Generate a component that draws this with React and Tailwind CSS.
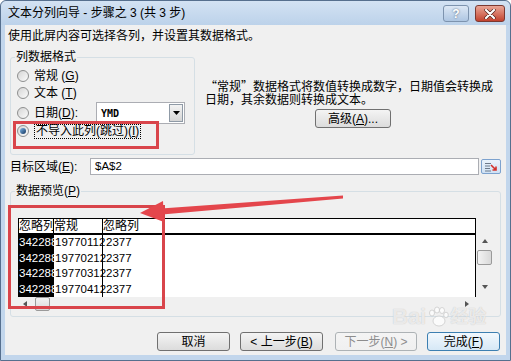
import clsx from "clsx";

function Radio({ checked }) {
  return (
    <span className="flex h-[12px] w-[12px] shrink-0 items-center justify-center rounded-full border border-[#8e8f8f] bg-linear-to-br from-[#d5d5d5] to-[#fbfbfb]">
      {checked && (
        <span className="h-[6px] w-[6px] rounded-full bg-linear-to-br from-[#7fb8ea] to-[#16375f]" />
      )}
    </span>
  );
}

function Btn({ children, className, disabled, focused }) {
  return (
    <div
      className={clsx(
        "flex h-[19px] shrink-0 items-center justify-center rounded-[3px] border bg-linear-to-b text-[12px] leading-[14px]",
        focused && "border-[#3c7fb1] from-[#f2f8fd] to-[#d6e8f6] text-black",
        disabled && "border-[#adb2b5] from-[#f4f4f4] to-[#f0f0f0] text-[#8d8d8d]",
        !focused && !disabled && "border-[#707070] from-[#f4f4f4] to-[#dcdcdc] text-black",
        className
      )}
    >
      {children}
    </div>
  );
}

function GroupLabel({ children }) {
  return (
    <span className="absolute -top-[8px] left-[4px] bg-[#f0f0f0] px-[1px] text-[12px] leading-[14px]">
      {children}
    </span>
  );
}

const rows = ["19770112", "19770212", "19770312", "19770412"];

export default function App() {
  return (
    <div className="relative h-[361px] w-[511px] overflow-hidden bg-white font-['Liberation_Sans','Noto_Sans_CJK_SC',sans-serif] text-black">
      <div className="flex h-full flex-col rounded-t-[6px] border border-[#566f8e] bg-[#c2d6ec]">
        {/* title bar */}
        <div className="flex h-[24px] shrink-0 items-start rounded-t-[6px] bg-linear-to-b from-[#d3e2f3] to-[#bcd2ea]">
          <span className="pl-[7px] pt-[5px] text-[12px] leading-[14px] text-black">
            文本分列向导 - 步骤之 3 (共 3 步)
          </span>
          <div className="ml-auto mt-[4px] flex h-[17px] w-[26px] items-center justify-center rounded-[3px] border border-[#7d93ae] bg-linear-to-b from-[#dde8f5] to-[#aec6e2] text-[12px] font-bold text-white [text-shadow:0_0_2px_#44566e]">
            ?
          </div>
          <div className="ml-[6px] mr-[5px] mt-[4px] flex h-[17px] w-[30px] items-center justify-center rounded-[3px] border border-[#7b3931] bg-linear-to-b from-[#e8a596] to-[#c2412e]">
            <svg width="12" height="10" viewBox="0 0 12 10">
              <path d="M2 1 L10 9 M10 1 L2 9" stroke="#4a1d18" strokeWidth="3.4" strokeLinecap="round" />
              <path d="M2 1 L10 9 M10 1 L2 9" stroke="#fff" strokeWidth="2.2" strokeLinecap="round" />
            </svg>
          </div>
        </div>

        {/* client area */}
        <div className="mx-[4px] mb-[5px] flex flex-1 flex-col bg-[#f0f0f0] text-[12px]">
          <div className="h-[19px] pl-[3px] pt-[3px] leading-[16px]">
            使用此屏内容可选择各列，并设置其数据格式。
          </div>

          <div className="mt-[13px] flex">
            <div className="relative ml-[5px] h-[98px] w-[185px] shrink-0 rounded-[3px] border border-[#d5dfe5]">
              <GroupLabel>列数据格式</GroupLabel>
              <div className="flex flex-col pl-[6px] pt-[10px]">
                <div className="flex h-[16px] items-center gap-[5px]">
                  <Radio />
                  <span>常规 (<u>G</u>)</span>
                </div>
                <div className="flex h-[18px] items-center gap-[5px]">
                  <Radio />
                  <span>文本 (<u>T</u>)</span>
                </div>
                <div className="flex h-[22px] items-center gap-[5px]">
                  <Radio />
                  <span>日期(<u>D</u>):</span>
                  <div className="ml-auto mr-[9px] flex h-[22px] w-[89px] items-center border border-[#abadb3] bg-white">
                    <span className="pl-[4px] font-['DejaVu_Sans_Mono',monospace] text-[10px] font-bold">YMD</span>
                    <div className="ml-auto mr-[1px] flex h-[18px] w-[14px] items-center justify-center border border-[#8f9aa6] bg-linear-to-b from-[#f3f3f3] to-[#d5d5d5]">
                      <svg width="7" height="4" viewBox="0 0 7 4">
                        <path d="M0 0 H7 L3.5 4 Z" fill="#000" />
                      </svg>
                    </div>
                  </div>
                </div>
                <div className="flex h-[14px] items-center gap-[5px]">
                  <Radio checked />
                  <span className="border border-dotted border-black px-[1px] leading-[13px]">
                    不导入此列(跳过)(<u>I</u>)
                  </span>
                </div>
              </div>
            </div>

            <div className="ml-[10px] mt-[22px] flex flex-col leading-[13px]">
              <div className="whitespace-nowrap">
                <span className="font-['Noto_Sans_CJK_SC',sans-serif]">“</span>常规
                <span className="font-['Noto_Sans_CJK_SC',sans-serif]">”</span>数据格式将数值转换成数字，日期值会转换成
              </div>
              <div className="whitespace-nowrap">日期，其余数据则转换成文本。</div>
              <Btn className="ml-[110px] mt-[2px] w-[76px] self-start">
                高级(<u>A</u>)...
              </Btn>
            </div>
          </div>

          <div className="mt-[3px] flex h-[17px] items-center">
            <span className="w-[85px] shrink-0 pl-[5px]">目标区域(<u>E</u>):</span>
            <div className="flex h-[17px] flex-1 items-center border border-[#abadb3] bg-white pl-[4px] text-[11.5px]">
              $A$2
            </div>
            <div className="ml-[2px] mr-[5px] flex h-[15px] w-[20px] items-center justify-center rounded-[2px] border border-[#7da2ce] bg-linear-to-b from-[#eaf3fc] to-[#cfe1f4]">
              <svg width="14" height="10" viewBox="0 0 14 10">
                <path d="M1 1.5 H7 M1 4 H6 M1 6.5 H6 M1 9 H7" stroke="#6d7a8a" strokeWidth="1" />
                <path d="M7 3 L12 8 M12 4.5 V8 H8.5" stroke="#d4302a" strokeWidth="1.6" fill="none" />
              </svg>
            </div>
          </div>

          <div className="relative ml-[5px] mr-[5px] mt-[16px] h-[126px] rounded-[3px] border border-[#d5dfe5]">
            <GroupLabel>数据预览(<u>P</u>)</GroupLabel>
            <div className="pl-[7px] pt-[26px]">
              <div className="flex h-[93px] w-[475px] flex-col">
                <div className="flex h-[79px]">
                  <div className="flex w-[458px] flex-col border-x border-t border-black bg-white">
                    <div className="flex h-[16px] items-end border-b-2 border-black leading-[14px]">
                      <div className="w-[35px] overflow-hidden whitespace-nowrap border-r border-black">忽略列</div>
                      <div className="w-[49px] border-r border-black">常规</div>
                      <div>忽略列</div>
                    </div>
                    <div className="flex flex-col text-[11.5px]">
                      {rows.map((r) => (
                        <div key={r} className="flex h-[15.5px] items-center">
                          <div className="flex h-full w-[35px] items-center overflow-hidden whitespace-nowrap bg-black text-white">
                            342288
                          </div>
                          <div className="flex h-full w-[49px] items-center whitespace-nowrap border-r border-black pl-[1px]">
                            {r}
                          </div>
                          <div className="pl-[3px]">2377</div>
                        </div>
                      ))}
                    </div>
                  </div>
                  <div className="flex w-[17px] flex-col items-center">
                    <div className="mt-[21px] h-0 w-0 border-x-[3px] border-b-[4px] border-x-transparent border-b-[#555]" />
                    <div className="mt-[7px] h-[15px] w-[15px] rounded-[2px] border border-[#9a9a9a] bg-linear-to-r from-[#f3f3f3] to-[#d9d9d9]" />
                    <div className="mt-[20px] h-0 w-0 border-x-[3px] border-t-[4px] border-x-transparent border-t-[#555]" />
                  </div>
                </div>
                <div className="flex h-[14px] w-[458px] items-center">
                  <div className="ml-[5px] h-0 w-0 border-y-[3px] border-r-[4px] border-y-transparent border-r-[#555]" />
                  <div className="ml-[8px] h-[14px] w-[15px] rounded-[2px] border border-[#9a9a9a] bg-linear-to-b from-[#f3f3f3] to-[#d9d9d9]" />
                  <div className="ml-auto mr-[7px] h-0 w-0 border-y-[3px] border-l-[4px] border-y-transparent border-l-[#555]" />
                </div>
              </div>
            </div>
          </div>

          <div className="mt-[15px] flex justify-end pr-[6px]">
            <Btn className="w-[73px]">取消</Btn>
            <Btn className="ml-[10px] w-[83px]">&lt; 上一步(<u>B</u>)</Btn>
            <Btn className="ml-[12px] w-[82px]" disabled>
              下一步(<u>N</u>) &gt;
            </Btn>
            <Btn className="ml-[10px] w-[73px]" focused>
              完成(<u>F</u>)
            </Btn>
          </div>
        </div>
      </div>

      {/* annotations */}
      <div className="pointer-events-none absolute left-[13px] top-[121px] h-[28px] w-[146px] border-[3px] border-[#d9454b]" />
      <div className="pointer-events-none absolute left-[8px] top-[205px] h-[104px] w-[157px] border-[3px] border-[#d9454b]" />
      <svg className="pointer-events-none absolute left-0 top-0" width="511" height="361">
        <polygon points="343,195.5 343,198.5 162,214.5 161,208.5" fill="#e4464c" />
        <polygon points="140,213 163,201 164,222" fill="#e4464c" />
      </svg>
      <div className="pointer-events-none absolute left-[392px] top-[304px] flex items-center text-[22px] font-bold leading-[26px] text-white/70 [text-shadow:0_0_1px_#b8b8b8]">
        <span>Bai</span>
        <svg width="22" height="22" viewBox="0 0 22 22" className="mx-[1px]">
          <g fill="#ffffff" fillOpacity="0.7" stroke="#bdbdbd" strokeWidth="0.6">
            <ellipse cx="5" cy="7" rx="2.5" ry="3" />
            <ellipse cx="10" cy="4" rx="2.5" ry="3" />
            <ellipse cx="15" cy="4.5" rx="2.5" ry="3" />
            <ellipse cx="19" cy="9" rx="2.3" ry="2.8" />
            <ellipse cx="12" cy="15" rx="6" ry="5" />
          </g>
        </svg>
        <span className="text-[18px]">经验</span>
      </div>
    </div>
  );
}
